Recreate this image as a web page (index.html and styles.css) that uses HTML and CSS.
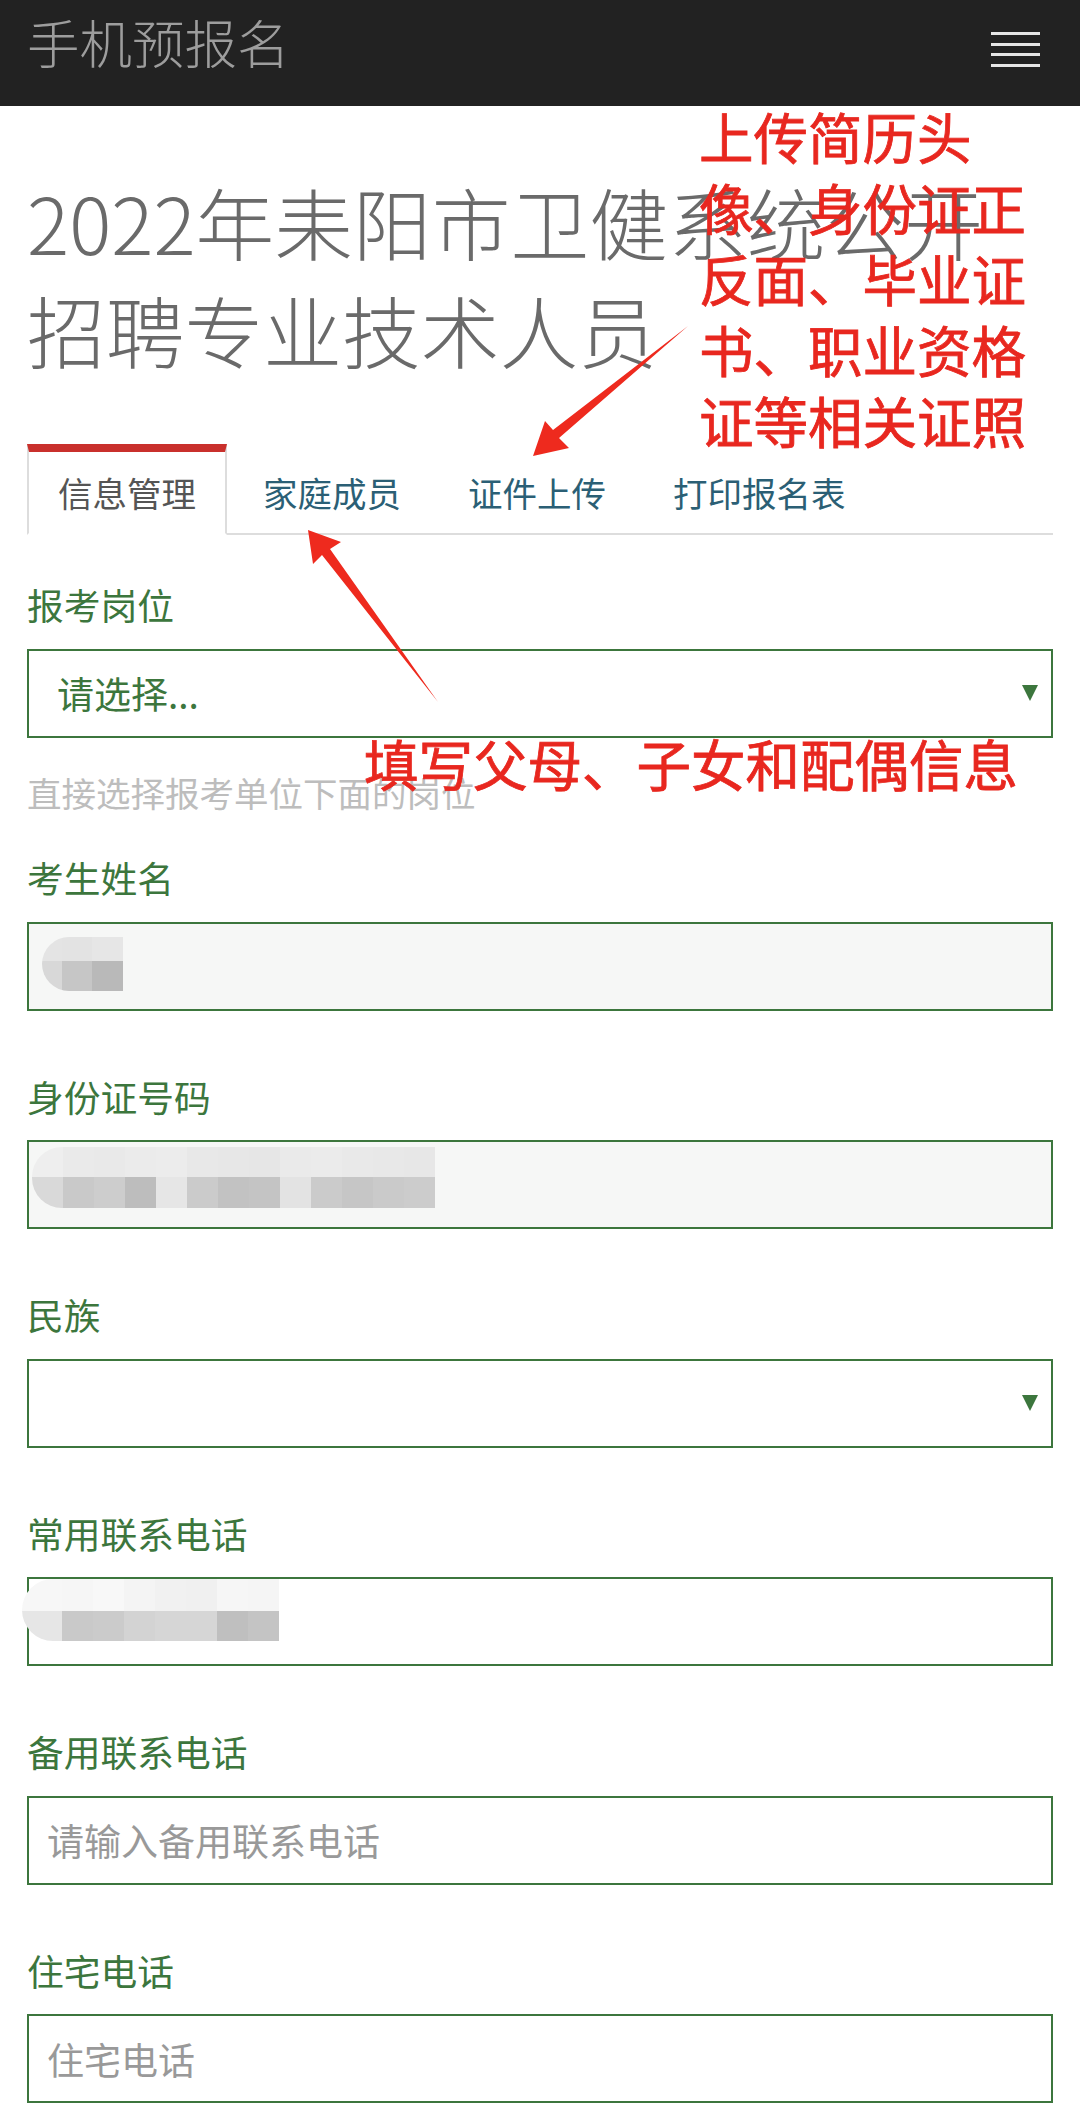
FILE: index.html
```html
<!DOCTYPE html>
<html lang="zh-CN">
<head>
<meta charset="utf-8">
<title>手机预报名</title>
<link rel="stylesheet" href="styles.css">
</head>
<body>
<header class="navbar">
  <div class="brand">手机预报名</div>
  <div class="toggle"><span class="bar"></span><span class="bar"></span><span class="bar"></span><span class="bar"></span></div>
</header>
<main class="container">
  <h1 class="page-title">2022年耒阳市卫健系统公开招聘专业技术人员</h1>
  <ul class="tabs">
    <li class="tab active">信息管理</li>
    <li class="tab">家庭成员</li>
    <li class="tab">证件上传</li>
    <li class="tab">打印报名表</li>
  </ul>
  <form class="form">
    <div class="form-group has-help">
      <label class="label">报考岗位</label>
      <div class="field select"><span class="select-text">请选择...</span><span class="caret"></span></div>
      <p class="help">直接选择报考单位下面的岗位</p>
    </div>
    <div class="form-group">
      <label class="label">考生姓名</label>
      <div class="field readonly masked">
        <div class="mosaic mosaic-name">
          <i class="c-e4"></i><i class="c-e3"></i><i class="c-e6"></i>
          <i class="c-d8"></i><i class="c-c6"></i><i class="c-b9"></i>
        </div>
      </div>
    </div>
    <div class="form-group">
      <label class="label">身份证号码</label>
      <div class="field readonly masked">
        <div class="mosaic mosaic-id">
          <i class="c-ee"></i><i class="c-ea"></i><i class="c-e9"></i><i class="c-eb"></i><i class="c-ec"></i><i class="c-e8"></i><i class="c-e7"></i><i class="c-e6"></i><i class="c-ea"></i><i class="c-eb"></i><i class="c-e9"></i><i class="c-e8"></i><i class="c-e7"></i>
          <i class="c-d9"></i><i class="c-c9"></i><i class="c-cd"></i><i class="c-bd"></i><i class="c-e6"></i><i class="c-cb"></i><i class="c-c2"></i><i class="c-c4"></i><i class="c-e3"></i><i class="c-cb"></i><i class="c-c6"></i><i class="c-ca"></i><i class="c-cc"></i>
        </div>
      </div>
    </div>
    <div class="form-group">
      <label class="label">民族</label>
      <div class="field select"><span class="select-text"></span><span class="caret"></span></div>
    </div>
    <div class="form-group">
      <label class="label">常用联系电话</label>
      <div class="field masked">
        <div class="mosaic mosaic-phone">
          <i class="c-f7"></i><i class="c-f6"></i><i class="c-f8"></i><i class="c-f4"></i><i class="c-f1"></i><i class="c-f0"></i><i class="c-f6"></i><i class="c-f5"></i>
          <i class="c-e6"></i><i class="c-c9"></i><i class="c-cb"></i><i class="c-d3"></i><i class="c-d6"></i><i class="c-d6"></i><i class="c-bf"></i><i class="c-c4"></i>
        </div>
      </div>
    </div>
    <div class="form-group">
      <label class="label">备用联系电话</label>
      <div class="field input"><span class="placeholder">请输入备用联系电话</span></div>
    </div>
    <div class="form-group">
      <label class="label">住宅电话</label>
      <div class="field input"><span class="placeholder">住宅电话</span></div>
    </div>
  </form>
</main>

<div class="annotation note-upload">上传简历头<br>像、身份证正<br>反面、毕业证<br>书、职业资格<br>证等相关证照</div>
<div class="annotation note-family">填写父母、子女和配偶信息</div>
<svg class="arrows" viewBox="0 0 1080 2128" width="1080" height="2128" xmlns="http://www.w3.org/2000/svg">
  <polygon class="arrow" points="688,326 559,438 569,448 533,456 545,421 553,430"/>
  <polygon class="arrow" points="438,702 330,549 341,542 308,530 313,564 322,555"/>
</svg>
</body>
</html>
```

FILE: styles.css
```css
* { box-sizing: border-box; }

html, body {
  margin: 0;
  padding: 0;
  background: #fff;
}

body {
  position: relative;
  font-family: "Noto Sans CJK SC", "Noto Sans", sans-serif;
  width: 1080px;
  min-height: 2128px;
  overflow: hidden;
}

/* Navbar */
.navbar {
  height: 106px;
  background: #222;
  display: flex;
  justify-content: space-between;
  align-items: flex-start;
  padding: 0 40px 0 27px;
}

.brand {
  margin-top: 15px;
  font-size: 52.5px;
  line-height: 52.5px;
  font-weight: 300;
  color: #9d9d9d;
}

.toggle {
  margin-top: 32px;
  display: flex;
  flex-direction: column;
  gap: 7.5px;
}

.bar {
  display: block;
  width: 49px;
  height: 3px;
  background: #e6e6e6;
}

/* Content */
.container {
  padding: 0 27px;
}

.page-title {
  margin: 61px 0 61px;
  font-size: 78.75px;
  line-height: 108px;
  font-weight: 300;
  color: #6a6a6a;
}

/* Tabs */
.tabs {
  list-style: none;
  margin: 0;
  padding: 0;
  display: flex;
  border-bottom: 2px solid #ddd;
}

.tab {
  font-size: 34.5px;
  line-height: 81px;
  padding: 0 29px;
  border: 2px solid transparent;
  border-top-width: 8px;
  margin-right: 5px;
  margin-bottom: -2px;
  color: #2b5f75;
  white-space: nowrap;
}

.tab.active {
  color: #555;
  background: #fff;
  border-top-color: #c9302c;
  border-left-color: #ddd;
  border-right-color: #ddd;
  border-bottom-color: #fff;
}

/* Form */
.form {
  margin-top: 43px;
}

.form-group {
  margin-bottom: 59px;
}

.form-group.has-help {
  margin-bottom: 34px;
}

.label {
  display: block;
  font-size: 36.75px;
  line-height: 52.5px;
  margin-bottom: 18px;
  color: #3c763d;
}

.field {
  height: 89px;
  border: 2px solid #3c763d;
  background: #fff;
  display: flex;
  align-items: center;
}

.field.readonly {
  background: #f6f7f6;
}

.field.masked {
  align-items: flex-start;
}

.field.select {
  padding: 0 13px 0 28px;
}

.select-text {
  font-size: 37px;
  color: #3c763d;
}

.caret {
  margin-left: auto;
  width: 0;
  height: 0;
  border-left: 8px solid transparent;
  border-right: 8px solid transparent;
  border-top: 16px solid #3c763d;
}

.field.input {
  padding: 0 18px;
}

.placeholder {
  font-size: 37px;
  color: #999;
}

.help {
  margin: 30.5px 0 0;
  font-size: 34.5px;
  line-height: 49px;
  color: #bdbdbd;
}

/* Mosaic (blurred personal data) */
.mosaic {
  display: grid;
  overflow: hidden;
}

.mosaic i {
  display: block;
}

.mosaic-name {
  grid-template-columns: 20px 30px 31px;
  grid-template-rows: 24px 30px;
  margin: 13px 0 0 13px;
  border-radius: 27px 0 0 27px;
}

.mosaic-id {
  grid-template-columns: repeat(13, 31px);
  grid-template-rows: 30px 31px;
  margin: 5px 0 0 3px;
  border-radius: 30px 0 0 30px;
}

.mosaic-phone {
  grid-template-columns: 40px repeat(7, 31px);
  grid-template-rows: 32px 30px;
  margin: 0 0 0 -7px;
  border-radius: 31px 0 0 31px;
}

.c-b9 { background: #b9b9b9; }
.c-bd { background: #bdbdbd; }
.c-bf { background: #bfbfbf; }
.c-c2 { background: #c2c2c2; }
.c-c4 { background: #c4c4c4; }
.c-c6 { background: #c6c6c6; }
.c-c9 { background: #c9c9c9; }
.c-ca { background: #cacaca; }
.c-cb { background: #cbcbcb; }
.c-cc { background: #cccccc; }
.c-cd { background: #cdcdcd; }
.c-d3 { background: #d3d3d3; }
.c-d6 { background: #d6d6d6; }
.c-d8 { background: #d8d8d8; }
.c-d9 { background: #d9d9d9; }
.c-e3 { background: #e3e3e3; }
.c-e4 { background: #e4e4e4; }
.c-e6 { background: #e6e6e6; }
.c-e7 { background: #e7e7e7; }
.c-e8 { background: #e8e8e8; }
.c-e9 { background: #e9e9e9; }
.c-ea { background: #eaeaea; }
.c-eb { background: #ebebeb; }
.c-ec { background: #ececec; }
.c-ee { background: #eeeeee; }
.c-f0 { background: #f0f0f0; }
.c-f1 { background: #f1f1f1; }
.c-f4 { background: #f4f4f4; }
.c-f5 { background: #f5f5f5; }
.c-f6 { background: #f6f6f6; }
.c-f7 { background: #f7f7f7; }
.c-f8 { background: #f8f8f8; }

/* Red annotations drawn over the screenshot */
.annotation {
  position: absolute;
  font-family: "Noto Sans CJK SC", sans-serif;
  font-size: 54.5px;
  line-height: 71px;
  font-weight: 400;
  -webkit-text-stroke: 0.8px #e8271f;
  color: #e8271f;
  white-space: nowrap;
}

.note-upload {
  left: 699px;
  top: 100px;
}

.note-family {
  left: 364px;
  top: 727px;
}

.arrows {
  position: absolute;
  left: 0;
  top: 0;
  pointer-events: none;
}

.arrow {
  fill: #ee2a1e;
}
```
